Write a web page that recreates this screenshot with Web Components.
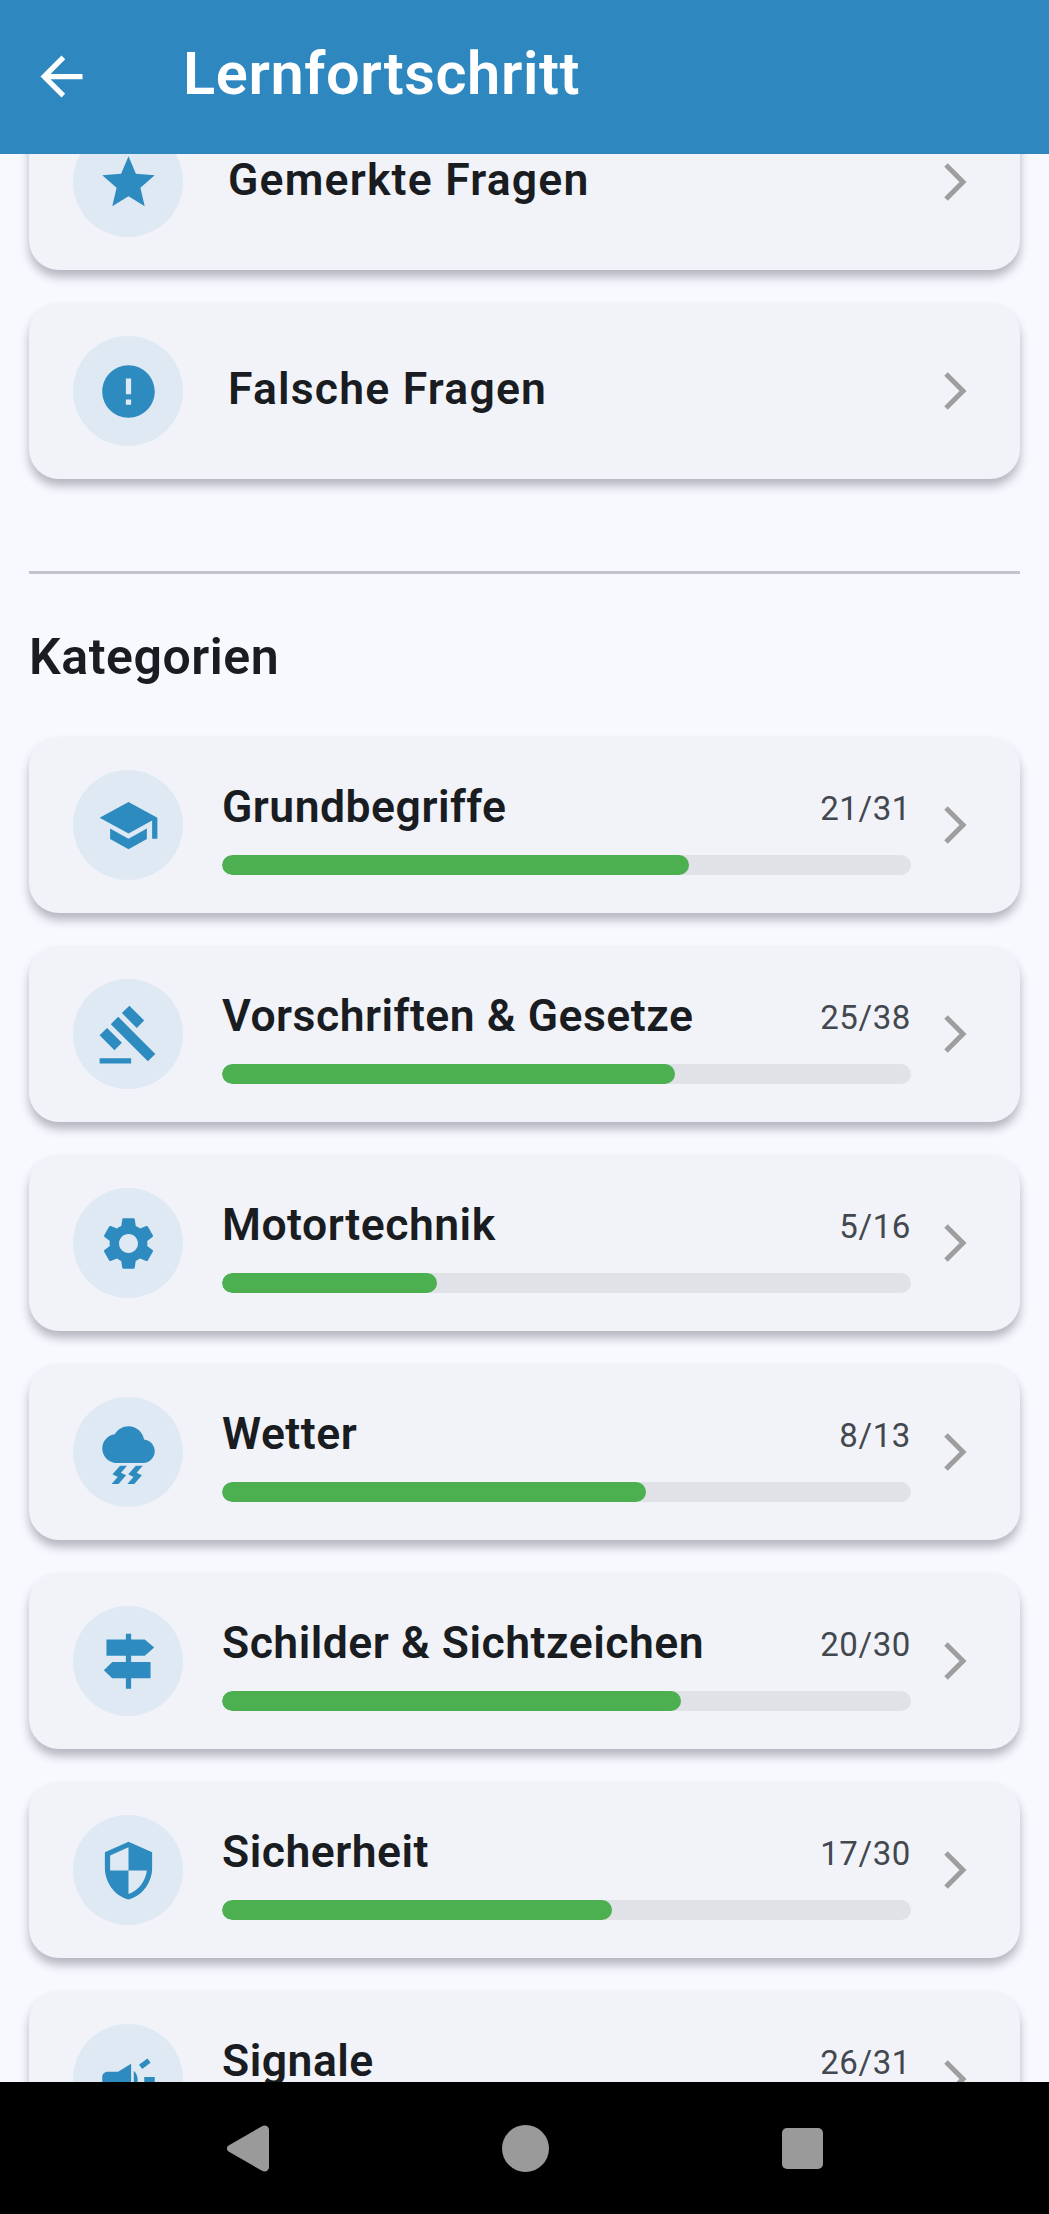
<!DOCTYPE html>
<html lang="de"><head><meta charset="utf-8"><title>Lernfortschritt</title>
<style>html,body{margin:0;padding:0;background:#f8f9ff;}body{font-family:Roboto,"Liberation Sans",sans-serif;}</style>
</head><body>
<progress-screen>
  <app-bar slot="top" title="Lernfortschritt"></app-bar>
  <link-card icon="star" label="Gemerkte Fragen"></link-card>
  <link-card icon="error" label="Falsche Fragen"></link-card>
  <section-head label="Kategorien"></section-head>
  <cat-card icon="school" label="Grundbegriffe" done="21" total="31"></cat-card>
  <cat-card icon="gavel" label="Vorschriften &amp; Gesetze" done="25" total="38"></cat-card>
  <cat-card icon="settings" label="Motortechnik" done="5" total="16"></cat-card>
  <cat-card icon="storm" label="Wetter" done="8" total="13"></cat-card>
  <cat-card icon="signpost" label="Schilder &amp; Sichtzeichen" done="20" total="30"></cat-card>
  <cat-card icon="shield" label="Sicherheit" done="17" total="30"></cat-card>
  <cat-card icon="campaign" label="Signale" done="26" total="31"></cat-card>
  <nav-bar slot="bottom"></nav-bar>
</progress-screen>
<script>
const ICONS={
star:'M12 17.27L18.18 21l-1.64-7.03L22 9.24l-7.19-.61L12 2 9.19 8.63 2 9.24l5.46 4.73L5.82 21z',
error:'M12 2C6.48 2 2 6.48 2 12s4.48 10 10 10 10-4.48 10-10S17.52 2 12 2zm1 15h-2v-2h2v2zm0-4h-2V7h2v6z',
school:'M5 13.18v4L12 21l7-3.82v-4L12 17l-7-3.82zM12 3L1 9l11 6 9-4.91V17h2V9L12 3z',
gavel:'M1 21h12v2H1v-2zM5.245 8.07l2.83-2.827 14.14 14.142-2.828 2.828L5.245 8.07zM12.317 1l5.657 5.656-2.83 2.83-5.654-5.66L12.317 1zM3.825 9.485l5.657 5.657-2.828 2.828-5.657-5.657 2.828-2.828z',
settings:'M19.14 12.94c.04-.3.06-.61.06-.94 0-.32-.02-.64-.07-.94l2.03-1.58c.18-.14.23-.41.12-.61l-1.92-3.32c-.12-.22-.37-.29-.59-.22l-2.39.96c-.5-.38-1.03-.7-1.62-.94l-.36-2.54c-.04-.24-.24-.41-.48-.41h-3.84c-.24 0-.43.17-.47.41l-.36 2.54c-.59.24-1.13.57-1.62.94l-2.39-.96c-.22-.08-.47 0-.59.22L2.74 8.87c-.12.21-.08.47.12.61l2.03 1.58c-.05.3-.09.63-.09.94s.02.64.07.94l-2.03 1.58c-.18.14-.23.41-.12.61l1.92 3.32c.12.22.37.29.59.22l2.39-.96c.5.38 1.03.7 1.62.94l.36 2.54c.05.24.24.41.48.41h3.84c.24 0 .44-.17.47-.41l.36-2.54c.59-.24 1.13-.56 1.62-.94l2.39.96c.22.08.47 0 .59-.22l1.92-3.32c.12-.22.07-.47-.12-.61l-2.01-1.58zM12 15.6c-1.98 0-3.6-1.62-3.6-3.6s1.62-3.6 3.6-3.6 3.6 1.62 3.6 3.6-1.62 3.6-3.6 3.6z',
storm:'M17.92 7.02C17.45 4.18 14.97 2 12 2 9.82 2 7.83 3.18 6.78 5.06 4.09 5.41 2 7.74 2 10.5 2 13.53 4.47 16 7.5 16h10c2.48 0 4.5-2.02 4.5-4.5 0-2.34-1.79-4.27-4.08-4.48zM14.8 17l-2.9 3.32 2 1L11.55 24h2.65l2.9-3.32-2-1L17.45 17H14.8zM8.8 17l-2.9 3.32 2 1L5.55 24H8.2l2.9-3.32-2-1L11.45 17H8.8z',
signpost:'M11 1.400h2v2.200h5.200l3.600 3.100-3.600 3.100H13v2.400h7.400v6.200H13v4h-2v-4H5.800l-3.200-3.100 3.200-3.100H11V9.800H3.600V3.600H11z',
shield:'M12 1L3 5v6c0 5.55 3.84 10.74 9 12 5.16-1.26 9-6.45 9-12V5l-9-4zm0 10.99h7c-.53 4.12-3.28 7.79-7 8.94V12H5V6.3l7-3.11v8.8z',
campaign:'M18 11v2h4v-2h-4zm-2 6.61c.96.71 2.21 1.65 3.2 2.39.4-.53.8-1.07 1.2-1.6-.99-.74-2.24-1.68-3.2-2.4-.4.54-.8 1.08-1.2 1.61zM20.4 5.6c-.4-.53-.8-1.07-1.2-1.6-.99.74-2.24 1.68-3.2 2.4.4.53.8 1.07 1.2 1.6.96-.72 2.21-1.65 3.2-2.4zM4 9c-1.1 0-2 .9-2 2v2c0 1.1.9 2 2 2h1v4h2v-4h1l5 3V6L8 9H4zm11.5 3c0-1.33-.58-2.53-1.5-3.35v6.69c.92-.81 1.5-2.01 1.5-3.34z'
};
const CARD_CSS=`
 :host{display:block;margin:0 29px 33px 29px;}
 .card{box-sizing:border-box;height:176px;background:#f1f3f9;border-radius:30px;box-shadow:0 7px 10px rgba(40,44,60,.32);display:flex;align-items:center;padding:0 53px 0 44px;}
 .disc{flex:none;width:110px;height:110px;border-radius:50%;background:#dfe9f3;display:flex;align-items:center;justify-content:center;}
 .disc svg{width:63px;height:63px;fill:#2e8bc0;display:block;}
 .chev{flex:none;width:24px;height:40px;fill:none;stroke:#9e9e9e;stroke-width:5;display:block;}
 .name{font-size:44.5px;font-weight:600;color:#191c20;white-space:nowrap;}
`;
const CHEV='<svg class="chev" viewBox="0 0 24 40"><path d="M3 3l17 17L3 37"/></svg>';
class BaseEl extends HTMLElement{
  render(html){ if(!this.shadowRoot) this.attachShadow({mode:'open'}); this.shadowRoot.innerHTML=html; }
}
customElements.define('progress-screen',class extends BaseEl{
  connectedCallback(){this.render(`<style>
   :host{display:flex;flex-direction:column;width:1049px;height:2214px;overflow:hidden;background:#f8f9ff;}
   .scroll{flex:1;min-height:0;overflow:hidden;}
   .inner{margin-top:-60px;}
  </style><slot name="top"></slot><div class="scroll"><div class="inner"><slot></slot></div></div><slot name="bottom"></slot>`);}
});
customElements.define('app-bar',class extends BaseEl{
  connectedCallback(){this.render(`<style>
   :host{display:flex;flex:none;align-items:flex-start;height:154px;background:#2e88bf;box-sizing:border-box;padding:45px 0 0 30px;color:#fff;}
   svg{width:63px;height:63px;fill:#fff;flex:none;display:block;}
   h1{margin:0 0 0 90px;font:600 59.5px/59px Roboto,sans-serif;letter-spacing:.6px;white-space:nowrap;}
  </style><svg viewBox="0 0 24 24"><path d="M20 11H7.83l5.59-5.59L12 4l-8 8 8 8 1.41-1.41L7.83 13H20v-2z"/></svg><h1>${this.getAttribute('title')}</h1>`);}
});
customElements.define('link-card',class extends BaseEl{
  connectedCallback(){this.render(`<style>${CARD_CSS}
   .name{flex:1;margin:-5px 0 0 45px;letter-spacing:1.2px;}
  </style><div class="card"><div class="disc"><svg viewBox="0 0 24 24"><path d="${ICONS[this.getAttribute('icon')]}"/></svg></div><div class="name">${this.getAttribute('label').replace('&','&amp;')}</div>${CHEV}</div>`);}
});
customElements.define('section-head',class extends BaseEl{
  connectedCallback(){this.render(`<style>
   :host{display:block;margin:0 29px;padding-top:59px;}
   hr{margin:0;border:0;height:3px;background:#c1c5cd;}
   h2{margin:58px 0 0;font:600 50px/50px Roboto,sans-serif;letter-spacing:.55px;color:#191c20;height:105px;}
  </style><hr><h2>${this.getAttribute('label')}</h2>`);}
});
customElements.define('cat-card',class extends BaseEl{
  connectedCallback(){
    const d=+this.getAttribute('done'),t=+this.getAttribute('total');
    this.render(`<style>${CARD_CSS}
   .body{flex:1;min-width:0;align-self:stretch;box-sizing:border-box;padding-top:45px;margin:0 32px 0 39px;display:flex;flex-direction:column;}
   .row{display:flex;justify-content:space-between;align-items:center;height:50px;}
   .name{letter-spacing:.5px;}
   .count{font-size:33px;color:#43474e;letter-spacing:.6px;margin-top:2px;}
   .track{height:20px;border-radius:10px;background:#e0e2e8;margin-top:23px;overflow:hidden;}
   .fill{height:100%;width:${d/t*100}%;background:#4caf50;border-radius:10px;}
  </style><div class="card"><div class="disc"><svg viewBox="0 0 24 24"><path d="${ICONS[this.getAttribute('icon')]}"/></svg></div>
  <div class="body"><div class="row"><span class="name">${this.getAttribute('label').replace('&','&amp;')}</span><span class="count">${d}/${t}</span></div><div class="track"><div class="fill"></div></div></div>${CHEV}</div>`);}
});
customElements.define('nav-bar',class extends BaseEl{
  connectedCallback(){this.render(`<style>
   :host{display:flex;flex:none;position:relative;z-index:2;height:132px;background:#000;align-items:center;justify-content:center;gap:233px;}
   svg{fill:#9a9a9a;display:block;}
  </style>
  <svg width="42" height="47" viewBox="0 0 42 47"><path d="M35 1.200C38 -.5 42 1 42 5v37c0 4-4 5.500-7 3.800L2 26.800c-2.700-1.600-2.700-5.000 0-6.600z"/></svg>
  <svg width="47" height="47" viewBox="0 0 47 47"><circle cx="23.500" cy="23.500" r="23.500"/></svg>
  <svg width="41" height="41" viewBox="0 0 41 41"><rect width="41" height="41" rx="5"/></svg>`);}
});
</script>
</body></html>
